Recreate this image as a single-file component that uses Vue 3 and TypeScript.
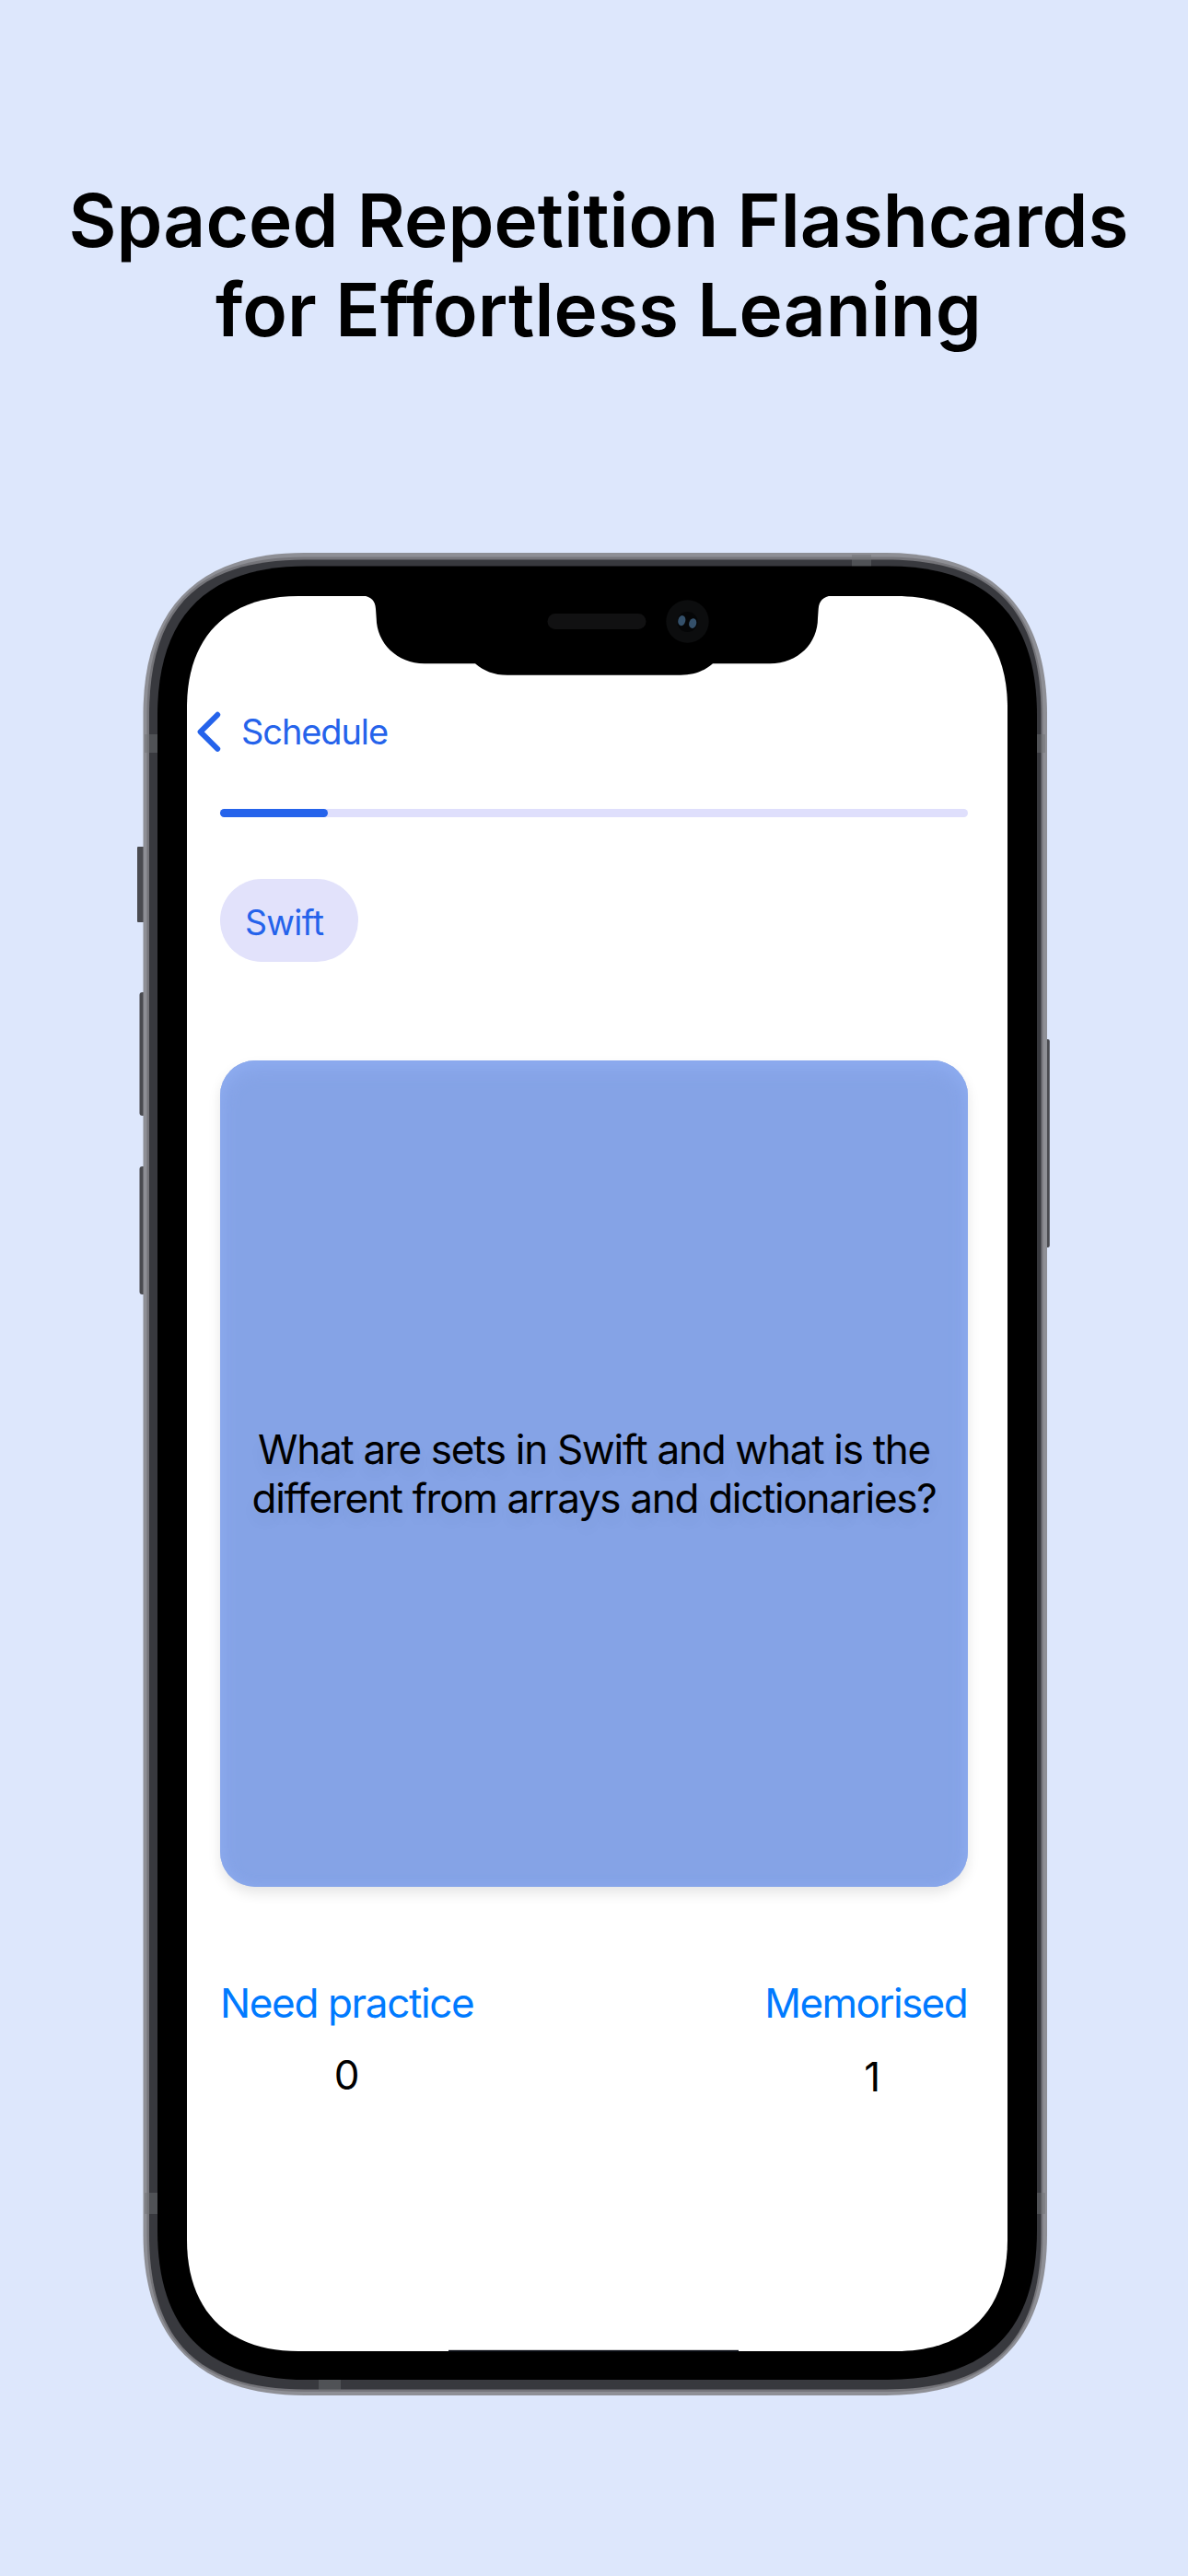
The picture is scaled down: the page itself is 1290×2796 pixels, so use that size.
<script setup lang="ts">
interface Stat {
  key: string
  label: string
  count: number
}

const titleLines: string[] = ['Spaced Repetition Flashcards', 'for Effortless Leaning']
const questionLines: string[] = [
  'What are sets in Swift and what is the',
  'different from arrays and dictionaries?',
]
const progress = 14.4
const stats: Stat[] = [
  { key: 'practice', label: 'Need practice', count: 0 },
  { key: 'memorised', label: 'Memorised', count: 1 },
]

// Continuous-curvature rounded rectangle: each corner spans `l`, with handles `c` away from the corner.
function squircle(x1: number, y1: number, x2: number, y2: number, l: number, c: number): string {
  return [
    `M${x1} ${y1 + l}`,
    `C${x1} ${y1 + c} ${x1 + c} ${y1} ${x1 + l} ${y1}`,
    `H${x2 - l}`,
    `C${x2 - c} ${y1} ${x2} ${y1 + c} ${x2} ${y1 + l}`,
    `V${y2 - l}`,
    `C${x2} ${y2 - c} ${x2 - c} ${y2} ${x2 - l} ${y2}`,
    `H${x1 + l}`,
    `C${x1 + c} ${y2} ${x1} ${y2 - c} ${x1} ${y2 - l}`,
    'Z',
  ].join(' ')
}

const rim = squircle(155.5, 600, 1137, 2600, 175, 60)
const bevel = squircle(159.5, 604.5, 1132.5, 2596, 171, 55)
const band = squircle(162, 607.5, 1130.5, 2593.5, 169, 53)
const bezel = squircle(171, 614.5, 1126, 2583, 162, 54)
const display = squircle(203, 647, 1094, 2552, 121, 44)
const notch =
  'M394 646.5 C403 647.5 407.5 652 408 661 L408.7 671 C409 698 431 720 461 720.3 H516 C525 728 536 732.8 551 732.8 H739 C754 732.8 765 728 774 720.3 H836 C867 720 888 698 888 671 L888.7 661 C889.5 652 894 647.5 903 646.5 Z'
</script>

<template>
  <main class="page">
    <h1 class="title">
      <span v-for="(line, i) in titleLines" :key="i">{{ line }}</span>
    </h1>

    <section class="phone">
      <svg class="frame" viewBox="145 600 1000 2000" aria-hidden="true">
        <g fill="#4a4b50">
          <rect x="149" y="919" width="10" height="82" rx="1" />
          <rect x="151.5" y="1077" width="8" height="134" rx="3" />
          <rect x="151.5" y="1266" width="8" height="139" rx="3" />
          <rect x="1133" y="1128" width="6.8" height="226" rx="2" />
        </g>
        <path :d="rim" fill="#8e8f95" />
        <path :d="bevel" fill="#75757a" />
        <path :d="band" fill="#38393e" />
        <g fill="#6f7073" opacity="0.45">
          <rect x="157" y="797" width="15" height="20" />
          <rect x="1125" y="797" width="10" height="20" />
          <rect x="925" y="602" width="21" height="13" />
          <rect x="346" y="2583" width="24" height="12" />
          <rect x="157" y="2380" width="15" height="23" />
          <rect x="1125" y="2380" width="10" height="23" />
        </g>
        <path :d="bezel" fill="#000" />
        <path :d="display" fill="#fff" />
        <path :d="notch" fill="#000" />
        <rect x="594.5" y="666" width="107" height="17" rx="8.5" fill="#111112" />
        <circle cx="746.5" cy="674.5" r="23.2" fill="#0c0d0e" />
        <circle cx="746.5" cy="675" r="11" fill="#050607" />
        <ellipse cx="740.3" cy="673.6" rx="4" ry="5.6" fill="#34506a" transform="rotate(14 740.3 673.6)" />
        <ellipse cx="752.2" cy="676.6" rx="4" ry="5.4" fill="#34506a" transform="rotate(14 752.2 676.6)" />
        <rect x="487" y="2550.8" width="315" height="2" fill="#0a0d14" />
      </svg>

      <div class="screen">
        <nav class="nav">
          <svg class="chevron" viewBox="0 0 26 44" aria-hidden="true">
            <path d="M22.2 3.8 L3.6 22.3 L22.2 40.8" />
          </svg>
          <span class="back">Schedule</span>
        </nav>

        <div class="track">
          <div class="fill" :style="{ width: progress + '%' }"></div>
        </div>

        <div class="tag"><span class="tag-text">Swift</span></div>

        <article class="card">
          <p class="question">
            <span v-for="(line, i) in questionLines" :key="i">{{ line }}</span>
          </p>
        </article>

        <div class="stats">
          <div v-for="stat in stats" :key="stat.key" :class="['stat', stat.key]">
            <span class="label">{{ stat.label }}</span>
            <span class="count">{{ stat.count }}</span>
          </div>
        </div>
      </div>
    </section>
  </main>
</template>

<style>
body {
  margin: 0;
  background: #dde7fc;
}
</style>

<style scoped>
.page {
  width: 1290px;
  height: 2796px;
  overflow: hidden;
  background: #dde7fc;
  font-family: Inter, "Liberation Sans", sans-serif;
}

.title {
  box-sizing: border-box;
  display: flex;
  flex-direction: column;
  align-items: center;
  height: 600px;
  margin: 0;
  padding: 190px 0 0 10px;
  color: #000;
  font-size: 80px;
  font-weight: 600;
  line-height: 97px;
  letter-spacing: 0.09px;
  white-space: nowrap;
}

.phone {
  display: grid;
  width: 1000px;
  height: 2000px;
  margin-left: 145px;
}

.frame,
.screen {
  grid-area: 1 / 1;
}

.frame {
  display: block;
  width: 1000px;
  height: 2000px;
}

.screen {
  display: flex;
  flex-direction: column;
  align-items: flex-start;
  width: 812px;
  padding: 170px 0 0 94px;
}

.nav {
  display: flex;
  align-items: center;
  height: 48px;
  margin-left: -25px;
  color: #2563eb;
}

.chevron {
  width: 26px;
  height: 44px;
  fill: none;
  stroke: #2563eb;
  stroke-width: 6;
  stroke-linecap: round;
  stroke-linejoin: round;
}

.back {
  margin-left: 22px;
  font-size: 38px;
  line-height: 48px;
  letter-spacing: -1.1px;
}

.track {
  width: 812px;
  height: 9px;
  margin-top: 59.5px;
  border-radius: 4.5px;
  background: #dfdffc;
}

.fill {
  height: 9px;
  border-radius: 4.5px;
  background: #2563eb;
}

.tag {
  box-sizing: border-box;
  width: 150px;
  height: 90px;
  margin-top: 67.5px;
  padding: 4px 0 0 27px;
  border-radius: 45px;
  background: #e2e2fb;
}

.tag-text {
  color: #2563eb;
  font-size: 37.5px;
  line-height: 87px;
  letter-spacing: -0.7px;
}

.card {
  display: flex;
  align-items: center;
  justify-content: center;
  width: 812px;
  height: 897px;
  margin-top: 107px;
  border-radius: 38px;
  background: #85a3e6;
  box-shadow:
    0 7px 14px rgba(0, 0, 0, 0.1),
    inset 0 8px 20px #8eacf0,
    inset 0 0 12px #8aa8eb;
}

.question {
  display: flex;
  flex-direction: column;
  align-items: center;
  margin: 0;
  color: #000;
  font-size: 44px;
  line-height: 53px;
  letter-spacing: -1.3px;
  text-shadow: 0 10px 16px rgba(0, 0, 0, 0.06);
  white-space: nowrap;
}

.stats {
  display: flex;
  justify-content: space-between;
  width: 812px;
  margin-top: 100px;
}

.stat {
  display: flex;
  flex-direction: column;
  align-items: center;
  font-size: 44px;
  line-height: 52px;
  white-space: nowrap;
}

.label {
  color: #007aff;
  letter-spacing: -1.35px;
}

.count {
  margin-top: 26px;
  color: #000;
}

.memorised .label {
  margin-right: 1px;
  letter-spacing: -1.6px;
}

.memorised .count {
  margin-top: 28px;
  padding-left: 13px;
}
</style>
